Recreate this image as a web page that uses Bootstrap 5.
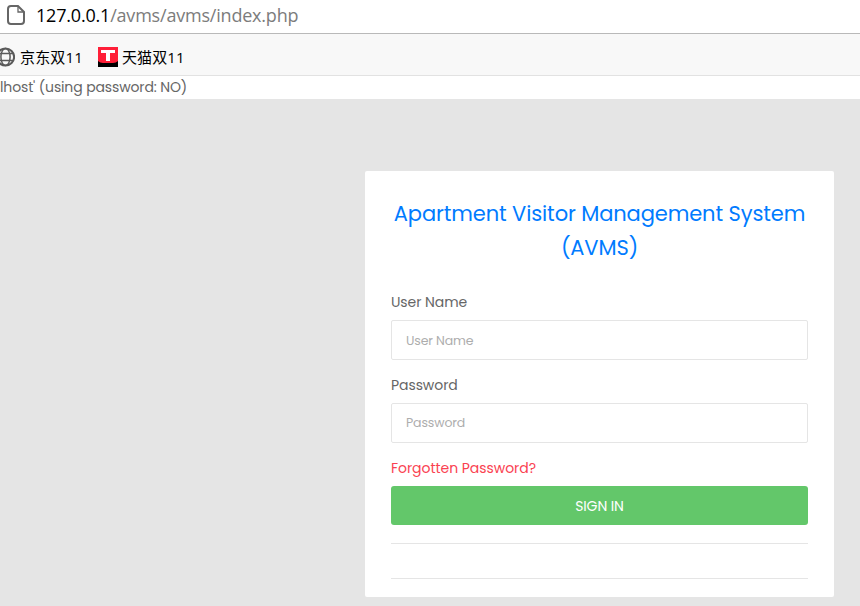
<!DOCTYPE html>
<html lang="en">
<head>
<meta charset="utf-8">
<title>Apartment Visitor Management System</title>
<link href="https://cdn.jsdelivr.net/npm/bootstrap@5.3.0/dist/css/bootstrap.min.css" rel="stylesheet">
<style>
body{font-family:Poppins,Inter,sans-serif;font-size:14px;line-height:23px;color:#666;background:#e5e5e5;height:606px;overflow:hidden}
.address{height:34px;border-bottom:1px solid #b9b9b9;font:18px/31px "Open Sans","Noto Sans",sans-serif;color:#7c7c7c;padding-left:7px}
.address svg{margin:5px 11px 0 0}
.address b{font-weight:400;color:#000}
.url{letter-spacing:-.2px;white-space:nowrap}
.bookmarks{height:42px;background:#f8f8f8;border-bottom:1px solid #e2e2e2;color:#000;font:15px/41px "Open Sans","Noto Sans CJK SC",sans-serif;padding-top:4px}
.bookmarks span{letter-spacing:.15px;line-height:38px}
.bookmarks svg{flex:none}
.globe{margin-left:-4px;margin-right:5px}
.tmall{margin-left:15px;margin-right:4px}
.warning{height:23px;letter-spacing:-.13px}
.login-wrap{padding:72px 26px 0 365px}
.login-box{height:426px;border-radius:2px;padding:26px}
.title{font-size:21px;line-height:34px;font-weight:400;color:#007bff;margin:0 0 26px;letter-spacing:-.11px;white-space:nowrap}
.field{margin-bottom:14px}
.field label{display:block;height:23px;margin-bottom:6px;letter-spacing:-.08px}
.field .form-control{height:40px;border:1px solid #e5e5e5;border-radius:2px;font-size:12.5px;padding:0 14px;letter-spacing:-.12px}
.field #user{padding-top:2px}
.field .form-control::placeholder{color:#adadad;opacity:1}
.forgot{color:#fa4251;height:23px;margin-bottom:6px;letter-spacing:-.05px}
.signin{height:39px;background:#63c76a;color:#fff;font-size:14px;border:0;border-radius:3px;padding:2px 0 0;letter-spacing:-.1px}
.rule{border-top:1px solid #e5e5e5;margin-top:18px}
.rule + .rule{margin-top:34px}
</style>
<script src="https://cdn.jsdelivr.net/npm/bootstrap@5.3.0/dist/js/bootstrap.bundle.min.js"></script>
</head>
<body>
<header>
  <div class="address bg-white d-flex align-items-start">
    <svg width="18" height="20" viewBox="0 0 18 20" fill="none" stroke="#666" stroke-width="2"><path d="M4 1H11L17 7V16Q17 19 14 19H4Q1 19 1 16V4Q1 1 4 1Z"/><path d="M11 1V7H17" stroke-width="1.3"/></svg>
    <span class="url"><b>127.0.0.1</b>/avms/avms/index.php</span>
  </div>
  <nav class="bookmarks d-flex align-items-center">
    <svg class="globe" width="19" height="20" viewBox="0 0 19 20" fill="none" stroke="#5a5a5a" stroke-width="1.5"><circle cx="9.5" cy="10" r="8.6" stroke-width="2"/><ellipse cx="9.5" cy="10" rx="4.6" ry="8.5"/><path d="M2 6.5H17M2 13.5H17"/></svg>
    <span>京东双11</span>
    <svg class="tmall" width="20" height="20" viewBox="0 0 20 20"><path fill="#ff1f38" d="M0 0H20V20H0Z"/><path d="M0 14Q2 16 5 16H15Q18 16 20 14V20H0Z"/><path fill="#fff" d="M3 3H17V6H12V14H8V6H3Z"/></svg>
    <span>天猫双11</span>
  </nav>
</header>
<div class="warning bg-white">lhost' (using password: NO)</div>
<main class="login-wrap">
  <form class="login-box bg-white">
    <h1 class="title text-center">Apartment Visitor Management System<br>(AVMS)</h1>
    <div class="field"><label for="user">User Name</label><input id="user" class="form-control" placeholder="User Name"></div>
    <div class="field"><label for="pass">Password</label><input id="pass" type="password" class="form-control" placeholder="Password"></div>
    <div class="forgot">Forgotten Password?</div>
    <button type="button" class="btn signin w-100 d-block">SIGN IN</button>
    <div class="rule"></div>
    <div class="rule"></div>
  </form>
</main>
</body>
</html>
